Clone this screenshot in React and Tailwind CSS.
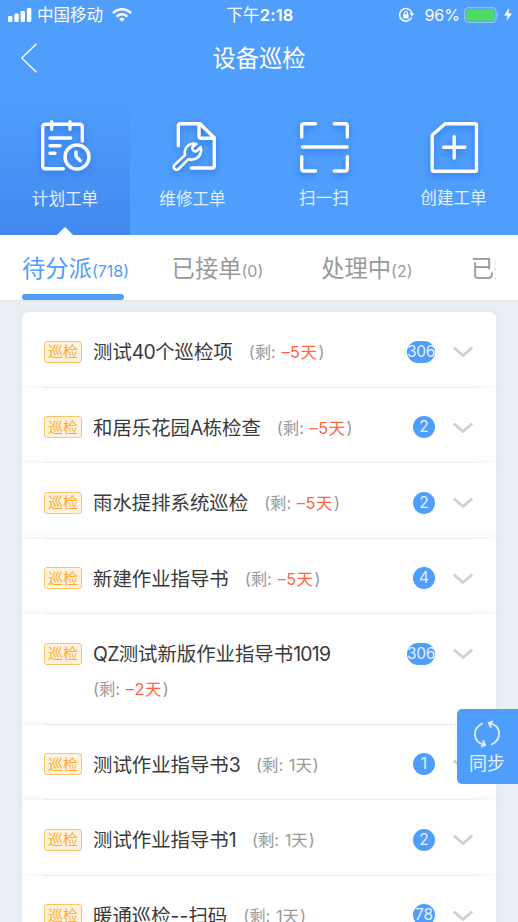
import clsx from 'clsx';

const PlanIcon = () => (
    <>
        <path d="M45.3 23V9.3q0-3-3-3H8.7q-3 0-3 3v38.4q0 3 3 3h17.6" />
        <path d="M14.7 3.7v7.6M33 3.7v7.6M13 20h20.7M13 27.7h10M13 35.3h5" />
        <circle cx="40" cy="39" r="12" />
        <path d="M39 34v3.5q0 1 .8 1.8l3.5 3.4" />
    </>
);

const RepairIcon = () => (
    <>
        <path d="M13.3 27.7V8.2q0-2.5 2.5-2.5H35l14.3 14V48q0 2-2 2h-21" />
        <path d="M34 6v12q0 2.3 2.3 2.3H49" />
        <path
            strokeWidth="2.6"
            d="M31.3 26.1C24.2 24.2 18.2 29.8 20.1 37L9.8 46.6c-2.9 3 1 7.1 4 4.2l9.6-9.6c7.5 2.3 14.7-4.2 12.1-12l-3.9 3.9q-1.7.9-3.4-.8-1.5-1.7-.7-3.2Z"
        />
    </>
);

const ScanIcon = () => (
    <>
        <path d="M5.7 19V8.2q0-2.5 2.5-2.5h11.3M38.3 5.7h10.5q2.5 0 2.5 2.5V19M5.7 38.7v11.8q0 2.5 2.5 2.5h11.3M38.3 53h10.5q2.5 0 2.5-2.5V38.7" />
        <path d="M6.5 29h44.6" />
    </>
);

const CreateIcon = () => (
    <>
        <path d="M19.2 5.7H49q1.5 0 1.5 1.5v44.6q0 1.5-1.5 1.5H7.7q-1.5 0-1.5-1.5V17Z" />
        <path d="M28.2 18.6V40M17.5 29.3h21.4" />
    </>
);

const actions = [
    { label: '计划工单', Icon: PlanIcon, active: true },
    { label: '维修工单', Icon: RepairIcon, className: 'pr-1' },
    { label: '扫一扫', Icon: ScanIcon, className: 'pl-px', labelClass: '-mt-[1.5px]' },
    { label: '创建工单', Icon: CreateIcon, className: 'pl-px', labelClass: '-mt-[1.5px]' },
];

const tabs = [
    { label: '待分派', count: 718, active: true },
    { label: '已接单', count: 0 },
    { label: '处理中', count: 2 },
    { label: '已完成' },
];

const orders = [
    { title: '测试40个巡检项', days: '–5天', late: true, count: 306 },
    { title: '和居乐花园A栋检查', days: '–5天', late: true, count: 2 },
    { title: '雨水提排系统巡检', days: '–5天', late: true, count: 2 },
    { title: '新建作业指导书', days: '–5天', late: true, count: 4 },
    { title: 'QZ测试新版作业指导书1019', days: '–2天', late: true, count: 306 },
    { title: '测试作业指导书3', days: '1天', count: 1 },
    { title: '测试作业指导书1', days: '1天', count: 2 },
    { title: '暖通巡检--扫码', days: '1天', count: 78 },
];

const StatusBar = () => (
    <div className="grid h-7 grid-cols-[1fr_auto_1fr] items-center pl-2 pr-[6px] text-[16.5px] leading-7">
        <div className="flex items-center">
            <svg className="h-[14px] w-6" viewBox="0 0 24 14" fill="currentColor">
                <rect x="0" y="8" width="4.4" height="6" rx="1.2" />
                <rect x="6.3" y="5.5" width="4.4" height="8.5" rx="1.2" />
                <rect x="12.6" y="3" width="4.4" height="11" rx="1.2" />
                <rect x="18.9" y="0" width="4.4" height="14" rx="1.2" />
            </svg>
            <span className="ml-[5px] pt-px">中国移动</span>
            <svg className="ml-[9px] h-[14px] w-5" viewBox="0 0 20 14" fill="none" stroke="currentColor" strokeWidth="2.5">
                <path d="M1 5.2c5-5.3 13-5.3 18 0" />
                <path d="M4.6 8.6c3-3.2 7.8-3.2 10.8 0" />
                <path d="M7.2 10.9c1.5-1.5 4.1-1.5 5.6 0L10 13.7Z" fill="currentColor" stroke="none" />
            </svg>
        </div>
        <span className="pt-px tracking-[0.2px]">下午<b className="font-semibold">2:18</b></span>
        <div className="flex items-center justify-end">
            <svg className="h-4 w-[18px]" viewBox="0 0 18 16" fill="none" stroke="currentColor" strokeWidth="1.5">
                <path d="M13.7 10.5A6.3 6.3 0 1 1 14.1 6.5" />
                <path d="M11.5 6.3h4.8l-2.4 3Z" fill="currentColor" stroke="none" />
                <rect x="5.2" y="7.2" width="5.4" height="4.2" rx="0.5" fill="currentColor" stroke="none" />
                <path d="M6.3 7.5V6q0-1.5 1.6-1.5T9.5 6v1.5" strokeWidth="1.1" />
            </svg>
            <span className="ml-2 text-[16px]">96%</span>
            <svg className="ml-[4px] h-4 w-9" viewBox="0 0 36 16">
                <rect x="0.7" y="0.7" width="31.3" height="14.6" rx="3.5" fill="none" stroke="#8fc2fd" strokeWidth="1.3" />
                <rect x="2.2" y="2.2" width="28.3" height="11.6" rx="2" fill="#4cd964" />
                <path d="M33.5 5.5q2 2.5 0 5Z" fill="#8fc2fd" />
            </svg>
            <svg className="ml-[4px] h-[13px] w-2" viewBox="0 0 8 13" fill="currentColor">
                <path d="M5 0 0 7.4h3.4L2.5 13 8 5.5H4.6Z" />
            </svg>
        </div>
    </div>
);

const ActionTile = ({ label, Icon, active, className, labelClass }) => (
    <button
        className={clsx(
            'relative flex flex-col items-center pt-[18px]',
            active && 'bg-linear-to-b from-[#4f9dfa] to-[#4288f0]',
            className
        )}
    >
        <svg
            className="h-[58px] w-14 shrink-0 drop-shadow-[0_3px_3px_#2b7bf2]"
            viewBox="0 0 56 58"
            fill="none"
            stroke="white"
            strokeWidth="3.4"
            strokeLinecap="round"
            strokeLinejoin="round"
        >
            <Icon />
        </svg>
        <span className={clsx('pt-[13px] text-[16.6px] leading-5 text-[#e4f0ff]', labelClass)}>{label}</span>
        {active && (
            <svg className="absolute bottom-0 left-1/2 h-2 w-4 -translate-x-1/2" viewBox="0 0 16 8" fill="white">
                <path d="M0 8 7 .8q1-1 2 0L16 8Z" />
            </svg>
        )}
    </button>
);

// Latin letters and digits sit a bit tighter than the Chinese around them
const MixedText = ({ text }) =>
    text.split(/([A-Z0-9]+)/).map((part, i) =>
        i % 2 ? <span key={i} className="tracking-[-0.7px]">{part}</span> : part
    );

const OrderRow = ({ title, days, late, count }) => (
    <li className="bg-white px-[22px] shadow-[0_0_7px_rgba(190,212,245,0.4)] first:rounded-t-md">
        <div className="flex items-start border-b border-[#eef0f1] pb-[17.5px] pt-[22px]">
            <div className="flex h-[35px] items-center">
                <span className="flex h-[22px] w-[38px] items-center justify-center rounded-[3px] border border-[#ffc368] bg-[#fff3e0] text-[15px] leading-none text-[#ffa928]">
                    巡检
                </span>
            </div>
            <div className="-mb-px ml-[11px] flex w-[310px] flex-wrap gap-x-4 pt-px leading-[35px]">
                <span className="text-[19.4px] text-[#3a3a3a]">
                    <MixedText text={title} />
                </span>
                <span className="text-[16.4px] text-[#999]">
                    (剩: <span className={clsx('mx-px', late && 'tracking-[0.5px] text-[#ff6540]')}>{days}</span>)
                </span>
            </div>
            <div className="ml-auto flex h-[35px] items-center">
                <span
                    className={clsx(
                        'flex h-[22px] items-center justify-center rounded-full bg-[#4f9efb] text-[15.5px] leading-none text-[#e6f1ff]',
                        count > 99 ? 'w-7 tracking-[-0.4px]' : 'w-[22px]'
                    )}
                >
                    {count}
                </span>
                <svg className="ml-[18px] mr-px mt-px h-3 w-5" viewBox="0 0 20 12" fill="none" stroke="#d0d0d0" strokeWidth="2.8">
                    <path d="M.8 1.5 10 9.5l9.2-8" />
                </svg>
            </div>
        </div>
    </li>
);

const App = () => {
    return (
        <div className="relative flex h-[922px] w-[518px] flex-col overflow-hidden bg-[#e9eff4] font-['Inter','Noto_Sans_CJK_SC',sans-serif]">
            {/* Header */}
            <header className="h-[235px] shrink-0 bg-[#4f9efb] text-white">
                <StatusBar />
                <div className="grid h-[72px] grid-cols-[1fr_auto_1fr] items-start px-5 pt-[15px]">
                    <svg className="h-[30px] w-[18px]" viewBox="0 0 18 30" fill="none" stroke="white" strokeWidth="1.4">
                        <path d="M16.5 .8 1.8 15l14.7 14.2" />
                    </svg>
                    <h1 className="text-[23.3px] leading-8">设备巡检</h1>
                </div>
                <div className="grid h-[135px] grid-cols-[130px_129px_129px_130px]">
                    {actions.map((action) => (
                        <ActionTile key={action.label} {...action} />
                    ))}
                </div>
            </header>

            {/* Status tabs */}
            <nav className="h-[66px] shrink-0 border-b border-[#e3e7ea] bg-white px-[22px]">
                <div className="flex h-[65px] overflow-hidden">
                    {tabs.map((tab) => (
                        <div
                            key={tab.label}
                            className={clsx(
                                'flex w-[149.6px] shrink-0 flex-col justify-between',
                                tab.active ? 'text-[#4f9efb]' : 'text-[#999]'
                            )}
                        >
                            <div className="whitespace-nowrap pt-[17px] text-[23.3px] leading-[34px]">
                                {tab.label}
                                {tab.count !== undefined && <span className="text-[16px]">({tab.count})</span>}
                            </div>
                            {tab.active && <div className="h-[6px] w-[102px] rounded-[3px] bg-[#4f9efb]" />}
                        </div>
                    ))}
                </div>
            </nav>

            {/* Work orders */}
            <ul className="mx-[22px] mt-[11px]">
                {orders.map((order) => (
                    <OrderRow key={order.title} {...order} />
                ))}
            </ul>

            {/* Floating sync button */}
            <button className="absolute right-0 top-[709px] flex h-[75px] w-[61px] flex-col items-center rounded-l-[5px] bg-[#4f9efb] pr-px pt-[11px] text-[#e6f1ff]">
                <svg className="h-7 w-7" viewBox="0 0 28 28" fill="none" stroke="currentColor" strokeWidth="1.8">
                    <path d="M9.8 3.2C-1.200 8.500-.800 22.500 11.800 24.900M8 26.600l4.200-1.600-2.200-4.600" />
                    <path d="M18.200 24.800C29.200 19.500 28.800 5.500 16.200 3.100M20 1.400l-4.200 1.600 2.200 4.600" />
                </svg>
                <span className="mt-[6px] text-[18px] leading-5">同步</span>
            </button>
        </div>
    );
};

export default App;
